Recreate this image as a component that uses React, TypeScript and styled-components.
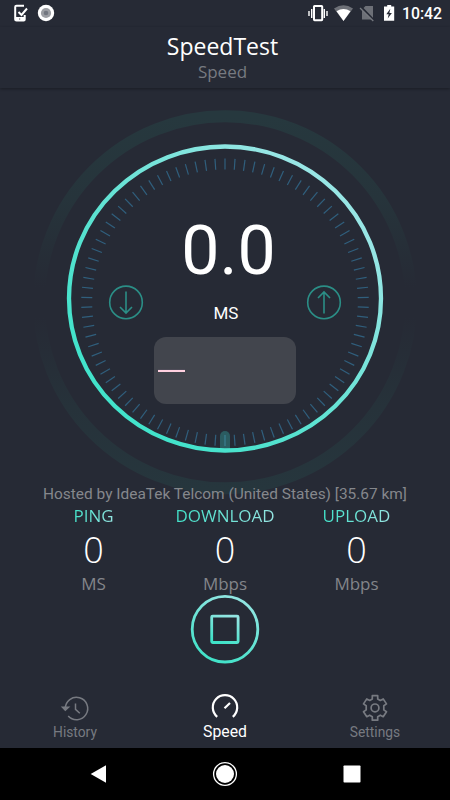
import React from 'react';
import styled, { createGlobalStyle } from 'styled-components';

const GlobalStyle = createGlobalStyle`
  * { box-sizing: border-box; }
  body { margin: 0; background: #262a35; }
`;

const openSans = '"Open Sans", "Noto Sans", sans-serif';
const roboto = 'Roboto, sans-serif';
const muted = '#83858a';

const Screen = styled.div`
  width: 450px;
  height: 800px;
  display: flex;
  flex-direction: column;
  overflow: hidden;
  background: #262a35;
  color: #fff;
  font-family: ${roboto};
`;

const StatusBar = styled.div`
  height: 27px;
  flex: none;
  padding: 0 9px 0 12px;
  display: flex;
  align-items: center;
  justify-content: space-between;
`;

const StatusGroup = styled.div`
  height: 27px;
  display: flex;
  align-items: center;
`;

const Clock = styled.span`
  margin-left: 6px;
  width: 39px;
  white-space: nowrap;
  font: 500 15.8px/27px ${roboto};
`;

const Header = styled.header`
  height: 61px;
  flex: none;
  display: flex;
  flex-direction: column;
  align-items: center;
  padding-right: 5px;
  box-shadow: 0 1px 3px rgba(0, 0, 0, 0.32);
`;

const Title = styled.h1`
  margin: 4px 0 0;
  font: 400 23px/30px ${openSans};
`;

const Subtitle = styled.div`
  font: 400 17px/22px ${openSans};
  color: #777a81;
`;

const Gauge = styled.section`
  position: relative;
  height: 396px;
  flex: none;
  display: flex;
  flex-direction: column;
  align-items: center;
`;

const Dial = styled.svg`
  position: absolute;
  inset: 0;
`;

const Readings = styled.div`
  position: relative;
  width: 234px;
  margin-top: 122px;
  display: grid;
  grid-template-columns: 36px 1fr 36px;
  grid-template-rows: 76px 32px 23px;
  justify-items: center;
`;

const Value = styled.div`
  grid-column: 1 / -1;
  padding-left: 7px;
  font: 400 68px/82px ${roboto};
`;

const Direction = styled.svg<{ $up?: boolean }>`
  grid-row: 2;
  grid-column: ${p => (p.$up ? 3 : 1)};
  align-self: center;
`;

const GaugeUnit = styled.div`
  grid-row: 2 / 4;
  grid-column: 2;
  padding: 16px 0 0 2px;
  font: 400 17px/23px ${roboto};
`;

const Graph = styled.div`
  position: relative;
  width: 142px;
  height: 67px;
  flex: none;
  margin-top: -4px;
  padding: 32px 4px 0;
  border-radius: 12px;
  background: #42454d;
`;

const GraphLine = styled.svg`
  display: block;
`;

const Host = styled.div`
  position: relative;
  height: 20px;
  flex: none;
  text-align: center;
  font: 400 15.45px/20px ${roboto};
  color: #85878c;
`;

const Results = styled.section`
  display: grid;
  grid-template-columns: repeat(3, 131.5px);
  justify-content: center;
  height: 90px;
  flex: none;
`;

const Result = styled.div`
  display: flex;
  flex-direction: column;
  align-items: center;
`;

const ResultLabel = styled.div`
  height: 24px;
  font: 400 17px/24px ${openSans};
  background: linear-gradient(100deg, #3fe2c8, #98e5e3);
  background-clip: text;
  -webkit-background-clip: text;
  color: transparent;
`;

const ResultValue = styled.div`
  height: 44px;
  font: 300 36px/44px ${openSans};
`;

const ResultUnit = styled.div`
  font: 400 17px/24px ${openSans};
  color: ${muted};
`;

const StopButton = styled.button`
  width: 70px;
  height: 70px;
  margin: 0 auto;
  padding: 0;
  border: 0;
  background: none;
  flex: none;
  svg { display: block; }
`;

const Tabs = styled.nav`
  height: 84px;
  flex: none;
  display: grid;
  grid-template-columns: repeat(3, 150px);
  padding-top: 30px;
`;

const Tab = styled.div<{ $active?: boolean }>`
  display: flex;
  flex-direction: column;
  align-items: center;
  color: ${p => (p.$active ? '#fff' : '#777a81')};
  font: 400 ${p => (p.$active ? '15.8px' : '13.8px')}/20px ${roboto};
  svg { flex: none; margin-bottom: -1px; }
`;

const AndroidBar = styled.div`
  height: 52px;
  flex: none;
  padding: 0 35px 1px;
  display: grid;
  grid-template-columns: repeat(3, 1fr);
  place-items: center;
  background: #000;
`;

const ticks = Array.from({ length: 90 }, (_, i) => i * 4);

function GaugeDial() {
  return (
    <Dial width="450" height="410" viewBox="0 88 450 410">
      <defs>
        <linearGradient id="halo" x1="0" y1="0" x2="0" y2="1">
          <stop offset="0" stopColor="#26383e" />
          <stop offset="0.22" stopColor="#26343b" />
          <stop offset="0.46" stopColor="#262a35" />
          <stop offset="0.54" stopColor="#262a35" />
          <stop offset="0.78" stopColor="#26323a" />
          <stop offset="1" stopColor="#26363d" />
        </linearGradient>
        <linearGradient id="rim" x1="0.2" y1="0.85" x2="0.85" y2="0.2">
          <stop offset="0" stopColor="#42e3cb" />
          <stop offset="0.35" stopColor="#58e2d0" />
          <stop offset="1" stopColor="#98e6e5" />
        </linearGradient>
      </defs>
      <circle cx="225" cy="302.3" r="186" fill="none" stroke="url(#halo)" strokeWidth="12" />
      <path d="M220 449v-13a5 5 0 0 1 10 0v13z" fill="#2b5c61" />
      {ticks.map(a => (
        <line
          key={a}
          x1="225"
          x2="225"
          y1="158.5"
          y2="169.5"
          stroke={a === 180 ? '#3a7f92' : '#305f7d'}
          strokeWidth="1.2"
          transform={`rotate(${a} 225 302.3)`}
        />
      ))}
      <ellipse cx="225" cy="298.5" rx="156" ry="152" fill="none" stroke="url(#rim)" strokeWidth="4.3" />
    </Dial>
  );
}

function DirectionIcon({ up }: { up?: boolean }) {
  return (
    <Direction $up={up} width="36" height="36" viewBox="0 0 36 36" fill="none" stroke="#2b8e86" strokeWidth="1.6">
      <circle cx="18" cy="18.4" r="16.3" />
      <path d={up ? 'M18 29.5V8M12 14l6-6 6 6' : 'M18 7.5V29M12 23l6 6 6-6'} />
    </Direction>
  );
}

const results = [
  { label: 'PING', value: '0', unit: 'MS' },
  { label: 'DOWNLOAD', value: '0', unit: 'Mbps' },
  { label: 'UPLOAD', value: '0', unit: 'Mbps' },
];

export default function App() {
  return (
    <>
      <GlobalStyle />
      <Screen>
        <StatusBar>
          <StatusGroup>
            <svg width="44" height="27" viewBox="0 0 44 27" fill="none">
              <path d="M12 5.8H4.5Q3.2 5.8 3.2 7v12.5q0 1 1.3 1h7.2q1 0 1-1V15" stroke="#fff" strokeWidth="2" />
              <path d="M3 17h10v4H3z" fill="#fff" />
              <path d="M6.5 12l3 3L15 8.5" stroke="#fff" strokeWidth="2" />
              <path d="M7.2 19h1" stroke="#262a35" />
              <circle cx="34" cy="13" r="8.2" fill="#fff" />
              <circle cx="34" cy="13" r="5.1" fill="#9c9ea3" />
              <circle cx="34" cy="13" r="2.3" fill="#737780" />
            </svg>
          </StatusGroup>
          <StatusGroup>
            <svg width="88" height="27" viewBox="308 0 88 27">
              <path d="M309 11v5M311.7 9v9M324.3 9v9M327 11v5" stroke="#fff" strokeWidth="1.4" />
              <rect x="314" y="6" width="8.2" height="14.2" rx="0.6" fill="none" stroke="#fff" strokeWidth="2" />
              <path d="M334 8.5Q343.5 1.8 353 8.5L343.5 21z" fill="#6d7077" />
              <path d="M336.5 11.2Q343.5 7 350.5 11.2L343.5 21z" fill="#fff" />
              <path d="M365.5 6H373v13.5h-11V9.5z" fill="#6d7077" />
              <path d="M361 7l13 13.5" stroke="#262a35" strokeWidth="2.4" />
              <path d="M360 8l13.3 13" stroke="#777a80" strokeWidth="1.3" />
              <path d="M385 6.5h2.2V5h4v1.5h3v14.2H384V6.5z" fill="#fff" />
              <path d="M390.3 8.8l-4 5.4h2.4l-1 4.2 4.2-5.5h-2.5z" fill="#262a35" />
            </svg>
            <Clock>10:42</Clock>
          </StatusGroup>
        </StatusBar>

        <Header>
          <Title>SpeedTest</Title>
          <Subtitle>Speed</Subtitle>
        </Header>

        <Gauge>
          <GaugeDial />
          <Readings>
            <Value>0.0</Value>
            <DirectionIcon />
            <DirectionIcon up />
            <GaugeUnit>MS</GaugeUnit>
          </Readings>
          <Graph>
            <GraphLine width="28" height="4" viewBox="0 0 28 4">
              <path d="M0 .4h27" stroke="#17222e" strokeWidth="0.8" />
              <path d="M0 1.9h27" stroke="#ffd0e0" strokeWidth="2.2" />
            </GraphLine>
          </Graph>
        </Gauge>

        <Host>Hosted by IdeaTek Telcom (United States) [35.67 km]</Host>

        <Results>
          {results.map(r => (
            <Result key={r.label}>
              <ResultLabel>{r.label}</ResultLabel>
              <ResultValue>{r.value}</ResultValue>
              <ResultUnit>{r.unit}</ResultUnit>
            </Result>
          ))}
        </Results>

        <StopButton aria-label="Stop">
          <svg width="70" height="70" viewBox="0 0 70 70" fill="none" strokeWidth="2.8">
            <defs>
              <linearGradient id="stop" x1="0.3" y1="1" x2="0.7" y2="0">
                <stop offset="0" stopColor="#3fe2c8" />
                <stop offset="1" stopColor="#93e5e2" />
              </linearGradient>
            </defs>
            <circle cx="35" cy="35.2" r="32.8" stroke="url(#stop)" />
            <rect x="21.7" y="22.1" width="26.4" height="26.4" rx="1" stroke="url(#stop)" />
          </svg>
        </StopButton>

        <Tabs>
          <Tab>
            <svg width="30" height="29" viewBox="0 0 30 29" fill="none" stroke="currentColor" strokeWidth="1.5">
              <path d="M5.3 14.5A11.2 11.2 0 1 1 8.2 22" />
              <path d="M2.5 13.2h6L5.3 16.2z" fill="currentColor" />
              <path d="M15.5 9.5v5.8l4.3 4" />
            </svg>
            History
          </Tab>
          <Tab $active>
            <svg width="30" height="29" viewBox="0 0 30 29" fill="none" stroke="currentColor" strokeWidth="2.2">
              <path d="M7.2 22.8A12.2 12.2 0 1 1 22.8 22.8" />
              <path d="M14.5 14.3L20 9" />
            </svg>
            Speed
          </Tab>
          <Tab>
            <svg width="30" height="29" viewBox="0 0 30 29" fill="none" stroke="currentColor" strokeWidth="1.7" strokeLinejoin="round">
              <path d="M12.3 1.7h5.4v3.2l2.6 1.5 2.9-1.5 3.3 5-2.7 1.8v4.2l2.7 1.8-3.3 5-2.9-1.5-2.6 1.5v3.5h-5.4v-3.5l-2.6-1.5-2.9 1.5-3.3-5 2.7-1.8v-4.2L3.5 9.9l3.3-5 2.9 1.5 2.6-1.5z" />
              <circle cx="15" cy="13.9" r="3.9" />
            </svg>
            Settings
          </Tab>
        </Tabs>

        <AndroidBar>
          <svg width="18" height="20" viewBox="0 0 18 20"><path d="M1.7 10L17 1.3v17.4z" fill="#fff" /></svg>
          <svg width="26" height="26" viewBox="0 0 26 26">
            <circle cx="13" cy="13" r="11.4" fill="none" stroke="#fff" strokeWidth="1.3" />
            <circle cx="13" cy="13" r="9" fill="#fff" />
          </svg>
          <svg width="18" height="18" viewBox="0 0 18 18"><rect x="0.5" y="0.5" width="17" height="17" rx="0.8" fill="#fff" /></svg>
        </AndroidBar>
      </Screen>
    </>
  );
}
